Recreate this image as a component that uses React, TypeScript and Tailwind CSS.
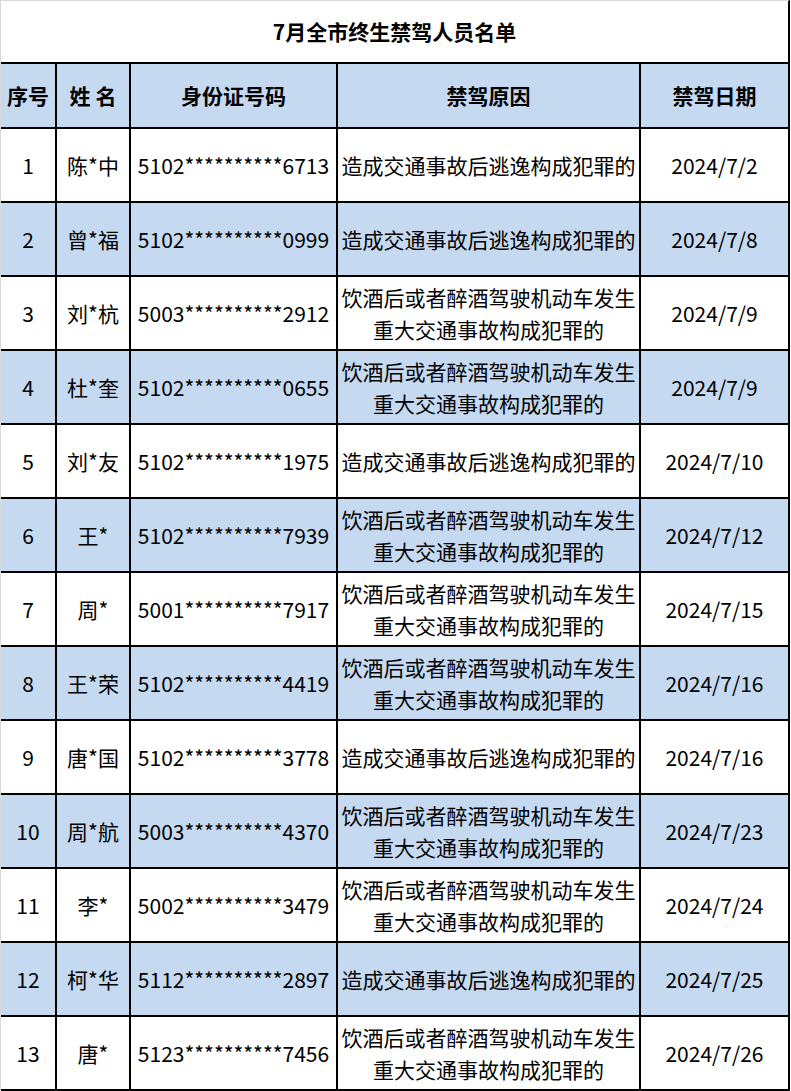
import React from "react";

const A = "饮酒后或者醉酒驾驶机动车发生\n重大交通事故构成犯罪的";
const B = "造成交通事故后逃逸构成犯罪的";

const rows: [string, string, string, string, string][] = [
  ["1", "陈*中", "5102**********6713", B, "2024/7/2"],
  ["2", "曾*福", "5102**********0999", B, "2024/7/8"],
  ["3", "刘*杭", "5003**********2912", A, "2024/7/9"],
  ["4", "杜*奎", "5102**********0655", A, "2024/7/9"],
  ["5", "刘*友", "5102**********1975", B, "2024/7/10"],
  ["6", "王*", "5102**********7939", A, "2024/7/12"],
  ["7", "周*", "5001**********7917", A, "2024/7/15"],
  ["8", "王*荣", "5102**********4419", A, "2024/7/16"],
  ["9", "唐*国", "5102**********3778", B, "2024/7/16"],
  ["10", "周*航", "5003**********4370", A, "2024/7/23"],
  ["11", "李*", "5002**********3479", A, "2024/7/24"],
  ["12", "柯*华", "5112**********2897", B, "2024/7/25"],
  ["13", "唐*", "5123**********7456", A, "2024/7/26"],
];

const headers = ["序号", "姓 名", "身份证号码", "禁驾原因", "禁驾日期"];

export default function App() {
  return (
    <div
      className="w-[791px] bg-white text-black"
      style={{ fontFamily: '"Noto Sans CJK SC", "Noto Sans", sans-serif' }}
    >
      <div className="w-[790px] border-l border-[#d9d9d9]">
        <div className="h-[62px] border-t border-[#d9d9d9] border-r-2 border-r-black flex items-center justify-center text-[21px] font-bold">
          7月全市终生禁驾人员名单
        </div>
        <div className="grid grid-cols-[54px_72px_205px_301px_147px] gap-[2px] bg-black py-[2px] pr-[2px]">
          {headers.map((h) => (
            <div
              key={h}
              className="h-[63px] bg-[#c5d9f1] flex items-center justify-center text-[21px] font-bold whitespace-pre"
            >
              {h}
            </div>
          ))}
          {rows.map((r, i) => {
            const bg = i % 2 === 1 ? "bg-[#c5d9f1]" : "bg-white";
            return (
              <React.Fragment key={r[0]}>
                {r.map((c, j) => (
                  <div
                    key={j}
                    className={`h-[72px] ${bg} flex items-center justify-center text-center text-[21px] leading-[32px] whitespace-pre`}
                  >
                    {c}
                  </div>
                ))}
              </React.Fragment>
            );
          })}
        </div>
      </div>
    </div>
  );
}
